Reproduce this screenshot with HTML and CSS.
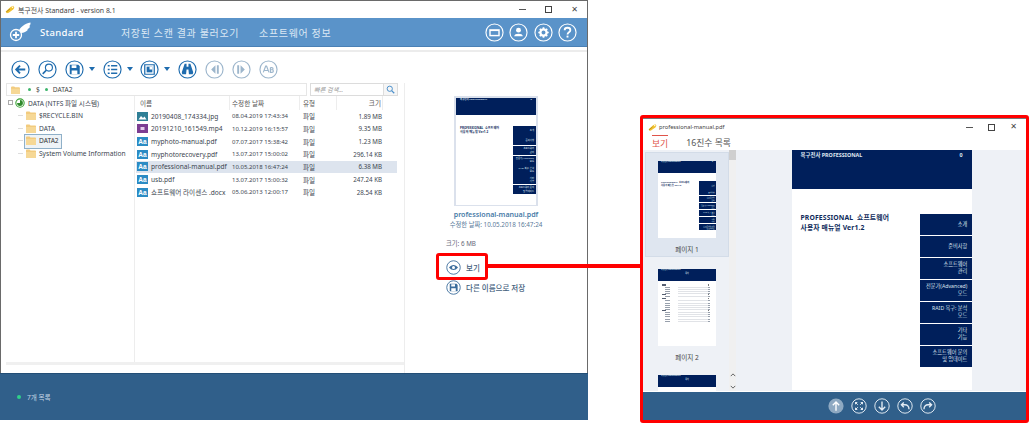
FILE: index.html
```html
<!DOCTYPE html>
<html lang="ko">
<head>
<meta charset="utf-8">
<title>복구전사 Standard</title>
<link rel="stylesheet" href="styles.css">
</head>
<body>
<svg class="sprite" xmlns="http://www.w3.org/2000/svg">
  <symbol id="key" viewBox="0 0 16 14"><path d="M1 10 9 3l4-2 2 3-2 3-7 5-3 1z" fill="#f2c230"/><path d="M2 11 8 6" stroke="#8a6a10" fill="none"/><circle cx="12" cy="3.5" r="1.2" fill="#fff"/></symbol>
  <symbol id="folder" viewBox="0 0 10 9"><path d="M0 1.5C0 .8.4.5 1 .5h2.5l1 1H9c.6 0 1 .4 1 1V8c0 .6-.4 1-1 1H1c-.6 0-1-.4-1-1z" fill="#f2cb7e"/><path d="M0 3h10v5c0 .6-.4 1-1 1H1c-.6 0-1-.4-1-1z" fill="#f6d896"/></symbol>
  <symbol id="ring" viewBox="0 0 20 20"><circle cx="10" cy="10" r="9" fill="none" stroke="currentColor" stroke-width="1.2"/></symbol>
  <symbol id="back" viewBox="0 0 20 20"><use href="#ring"/><path d="M15 10H6M9.5 6 5.5 10l4 4" fill="none" stroke="currentColor" stroke-width="2"/></symbol>
  <symbol id="find" viewBox="0 0 20 20"><use href="#ring"/><circle cx="11.5" cy="8" r="3.7" fill="none" stroke="currentColor" stroke-width="1.2"/><path d="M8.7 10.8 5 14.5" stroke="currentColor" stroke-width="1.8"/></symbol>
  <symbol id="save" viewBox="0 0 20 20"><use href="#ring"/><path d="M5 5h9l1.500 1.500V15H5z" fill="currentColor"/><path d="M7 5.500h5v3H7zM7 11h6v4H7z" fill="#fff"/></symbol>
  <symbol id="list" viewBox="0 0 20 20"><use href="#ring"/><path d="M8.500 6H15M8.500 10H15M8.500 14H15" stroke="currentColor" stroke-width="1.700"/><path d="M5 6h2M5 10h2M5 14h2" stroke="currentColor" stroke-width="1.700"/></symbol>
  <symbol id="pic" viewBox="0 0 20 20"><use href="#ring"/><path d="M5 5h10v10H5z" fill="none" stroke="currentColor" stroke-width="1.300"/><path d="M7 7h6v6H7z" fill="currentColor"/><path d="M10 7h3v3h-3z" fill="#fff"/></symbol>
  <symbol id="bino" viewBox="0 0 20 20"><use href="#ring"/><path d="M7 4h2v3h2V4h2l3 9-.5 2h-4L11 10H9l-.5 5h-4L4 13z" fill="currentColor"/></symbol>
  <symbol id="prev" viewBox="0 0 20 20"><use href="#ring"/><path d="M11 5.500v9L6.500 10zM12.500 5.500h2v9h-2z" fill="currentColor"/></symbol>
  <symbol id="next" viewBox="0 0 20 20"><use href="#ring"/><path d="M9 5.500v9l4.500-4.500zM5.500 5.500h2v9h-2z" fill="currentColor"/></symbol>
  <symbol id="ab" viewBox="0 0 20 20"><use href="#ring"/><path d="M4.500 13 7 6.500h1L10.500 13M5.500 11h4M12 8v5h1.700c1.900 0 1.900-2.700 0-2.700H12m0 0h1.500c1.700 0 1.700-2.300 0-2.300H12" fill="none" stroke="currentColor" stroke-width="1.200"/></symbol>
  <symbol id="eye" viewBox="0 0 20 20"><use href="#ring"/><path d="M4 10c3.500-4.500 8.500-4.500 12 0-3.500 4.500-8.500 4.500-12 0z" fill="currentColor"/><circle cx="10" cy="10" r="2" fill="#fff"/></symbol>
  <symbol id="card" viewBox="0 0 20 20"><use href="#ring"/><path d="M4.500 6.500h11v7.500h-11z" fill="currentColor"/><path d="M6 8.500h8v4H6z" fill="#5a93c9"/></symbol>
  <symbol id="user" viewBox="0 0 20 20"><use href="#ring"/><circle cx="10" cy="7.500" r="2.600" fill="currentColor"/><path d="M5.500 14c0-2 2-2.800 4.500-2.800s4.500.8 4.500 2.800z" fill="currentColor"/></symbol>
  <symbol id="gear" viewBox="0 0 20 20"><use href="#ring"/><circle cx="10" cy="10" r="3.300" fill="none" stroke="currentColor" stroke-width="2.400"/><path d="M10 4.500v2M10 13.500v2M4.500 10h2M13.500 10h2M6.100 6.100l1.400 1.400M12.500 12.500l1.400 1.400M6.100 13.900l1.400-1.400M12.500 7.500l1.400-1.400" stroke="currentColor" stroke-width="1.800"/></symbol>
  <symbol id="help" viewBox="0 0 20 20"><use href="#ring"/><path d="M7 7.500C7 5.800 8.400 5 10 5s3 .9 3 2.500c0 2.200-3 2.200-3 4.500" fill="none" stroke="currentColor" stroke-width="1.900"/><path d="M9 13.300h2v2H9z" fill="currentColor"/></symbol>
  <symbol id="up" viewBox="0 0 20 20"><circle cx="10" cy="10" r="9.500" fill="#8ea9c2"/><path d="M10 16V5M6 9l4-4 4 4" fill="none" stroke="#fff" stroke-width="1.700"/></symbol>
  <symbol id="fit" viewBox="0 0 20 20"><use href="#ring"/><path d="M5 5h3.500L5 8.500zM15 5v3.500L11.500 5zM5 15v-3.500L8.500 15zM15 15h-3.500l3.500-3.500z" fill="currentColor"/><path d="M6 6l2.500 2.500M14 6l-2.500 2.500M6 14l2.500-2.500M14 14l-2.500-2.500" stroke="currentColor" stroke-width="1.200"/></symbol>
  <symbol id="down" viewBox="0 0 20 20"><use href="#ring"/><path d="M10 4.500V15M6 11l4 4 4-4" fill="none" stroke="currentColor" stroke-width="1.700"/></symbol>
  <symbol id="undo" viewBox="0 0 20 20"><use href="#ring"/><path d="M15 14c0-3.500-2-5.500-5-5.500H6M8.500 5.500 5.500 8.500l3 3" fill="none" stroke="currentColor" stroke-width="1.700"/></symbol>
  <symbol id="redo" viewBox="0 0 20 20"><use href="#ring"/><path d="M5 14c0-3.500 2-5.500 5-5.500h4M11.500 5.500l3 3-3 3" fill="none" stroke="currentColor" stroke-width="1.700"/></symbol>
  <symbol id="aa" viewBox="0 0 11 9"><path d="M0 0h11v9H0z" fill="currentColor"/><text x="5.500" y="7" font-size="6.500" font-weight="700" text-anchor="middle" fill="#fff" font-family="Liberation Sans">Aa</text></symbol>
  <symbol id="jpg" viewBox="0 0 11 9"><path d="M0 0h11v9H0z" fill="#2f7f96"/><path d="M1.500 7.500 4 4l2 2 1.500-1.500 2 3z" fill="#fff"/></symbol>
  <symbol id="mp4" viewBox="0 0 11 9"><path d="M0 0h11v9H0z" fill="#7c3d92"/><path d="M3.500 3h4v3h-4z" fill="#e5cdec"/></symbol>
</svg>

<section class="win win-main">
  <header class="titlebar">
    <svg class="ti-key"><use href="#key"/></svg>
    <span class="ti-text">복구전사 Standard - version 8.1</span>
    <div class="winctl winctl-main">
      <span class="ctl-min"></span><span class="ctl-max"></span><span class="ctl-x">✕</span>
    </div>
  </header>
  <nav class="appbar">
    <svg class="logo" viewBox="0 0 22 20"><path d="M9 10.500C11 5 15.500 1.800 21.500.5c.2 1.800-.4 3-1.400 3.800l1 .2c-.6 1.400-1.600 2.200-2.900 2.700l.8.5c-1.600 2-4 3-7 3.200l-1.500.6c-.3-.3-.6-.6-1.500-1z" fill="#fff"/><circle cx="7" cy="13" r="5.500" fill="#5a93c9" stroke="#fff" stroke-width="1.300"/><path d="M7 9.800v6.400M3.800 13h6.400" stroke="#fff" stroke-width="1.800"/></svg>
    <span class="brand">Standard</span>
    <span class="navlink nav-a">저장된 스캔 결과 불러오기</span>
    <span class="navlink">소프트웨어 정보</span>
    <div class="appicons">
      <svg><use href="#card"/></svg><svg><use href="#user"/></svg><svg><use href="#gear"/></svg><svg><use href="#help"/></svg>
    </div>
  </nav>
  <div class="strip"></div>
  <div class="toolbar">
    <svg class="tool"><use href="#back"/></svg>
    <svg class="tool"><use href="#find"/></svg>
    <svg class="tool"><use href="#save"/></svg><i class="caret"></i>
    <svg class="tool"><use href="#list"/></svg><i class="caret"></i>
    <svg class="tool"><use href="#pic"/></svg><i class="caret"></i>
    <svg class="tool"><use href="#bino"/></svg>
    <svg class="tool off"><use href="#prev"/></svg>
    <svg class="tool off"><use href="#next"/></svg>
    <svg class="tool off"><use href="#ab"/></svg>
  </div>
  <div class="body">
    <div class="leftcol">
      <div class="pathrow">
        <div class="pathbar">
          <svg class="pf"><use href="#folder"/></svg><i class="dot"></i><span>$</span><i class="dot"></i><span>DATA2</span>
        </div>
        <div class="searchbox"><span class="sb-ph">빠른 검색...</span><span class="sb-btn"><svg viewBox="0 0 12 12"><circle cx="5" cy="5" r="3.500" fill="none" stroke="#4a8fcb" stroke-width="1.300"/><path d="m7.500 7.500 3.500 3.500" stroke="#4a8fcb" stroke-width="1.600"/></svg></span></div>
      </div>
      <div class="panes">
        <div class="tree">
          <div class="tree-root"><span class="minus"></span><svg class="disk" viewBox="0 0 12 12"><circle cx="6" cy="6" r="5" fill="none" stroke="#3aa335" stroke-width="1.300"/><path d="M6 6V2.500A3.500 3.500 0 1 1 2.500 6z" fill="#2f8a2c"/></svg><span>DATA (NTFS 파일 시스템)</span></div>
          <div class="tree-row"><svg class="tf"><use href="#folder"/></svg><span>$RECYCLE.BIN</span></div>
          <div class="tree-row"><svg class="tf"><use href="#folder"/></svg><span>DATA</span></div>
          <div class="tree-row cur"><svg class="tf"><use href="#folder"/></svg><span class="curlabel">DATA2</span></div>
          <div class="tree-row"><svg class="tf"><use href="#folder"/></svg><span>System Volume Information</span></div>
        </div>
        <div class="files">
          <div class="frow fhead"><span class="c-name">이름</span><span class="c-date">수정한 날짜</span><span class="c-type">유형</span><span class="c-size">크기</span></div>
          <div class="frow"><span class="c-name"><svg class="fi"><use href="#jpg"/></svg>20190408_174334.jpg</span><span class="c-date">08.04.2019 17:43:34</span><span class="c-type">파일</span><span class="c-size">1.89 MB</span></div>
          <div class="frow"><span class="c-name"><svg class="fi"><use href="#mp4"/></svg>20191210_161549.mp4</span><span class="c-date">10.12.2019 16:15:57</span><span class="c-type">파일</span><span class="c-size">9.35 MB</span></div>
          <div class="frow"><span class="c-name"><svg class="fi"><use href="#aa"/></svg>myphoto-manual.pdf</span><span class="c-date">07.07.2017 15:38:42</span><span class="c-type">파일</span><span class="c-size">1.23 MB</span></div>
          <div class="frow"><span class="c-name"><svg class="fi"><use href="#aa"/></svg>myphotorecovery.pdf</span><span class="c-date">13.07.2017 15:00:02</span><span class="c-type">파일</span><span class="c-size">296.14 KB</span></div>
          <div class="frow sel"><span class="c-name"><svg class="fi"><use href="#aa"/></svg>professional-manual.pdf</span><span class="c-date">10.05.2018 16:47:24</span><span class="c-type">파일</span><span class="c-size">6.38 MB</span></div>
          <div class="frow"><span class="c-name"><svg class="fi"><use href="#aa"/></svg>usb.pdf</span><span class="c-date">13.07.2017 15:00:32</span><span class="c-type">파일</span><span class="c-size">247.24 KB</span></div>
          <div class="frow"><span class="c-name"><svg class="fi"><use href="#aa"/></svg>쇼프트웨어 라이센스 .docx</span><span class="c-date">05.06.2013 12:00:17</span><span class="c-type">파일</span><span class="c-size">28.54 KB</span></div>
        </div>
      </div>
      <div class="hscroll"></div>
    </div>
    <aside class="details">
      <div class="preview">
        <div class="page page-m">
          <div class="pg-head"><span>복구전사 PROFESSIONAL</span><span>0</span></div>
          <div class="pg-main">
            <div class="pg-title">PROFESSIONAL&nbsp; 쇼프트웨어<br>사용자 매뉴얼 Ver1.2</div>
            <div class="pg-menu"><span>소개</span><span>준비사항</span><span>소프트웨어<br>관리</span><span>전문가(Advanced)<br>모드</span><span>RAID 복구: 분석<br>모드</span><span>기타<br>기능</span><span>소프트웨어 문의<br>및 업데이트</span></div>
          </div>
        </div>
      </div>
      <div class="d-name">professional-manual.pdf</div>
      <div class="d-date">수정한 날짜: 10.05.2018 16:47:24</div>
      <div class="d-size">크기: 6 MB</div>
      <div class="d-act act-view"><svg><use href="#eye"/></svg><span>보기</span></div>
      <div class="d-act"><svg><use href="#save"/></svg><span>다른 이름으로 저장</span></div>
    </aside>
  </div>
  <footer class="status"><i class="led"></i><span>7개 목록</span></footer>
</section>

<div class="callout"></div>
<div class="callout-line"></div>

<section class="win win-view">
  <header class="v-title">
    <svg class="ti-key"><use href="#key"/></svg>
    <span class="vt-text">professional-manual.pdf</span>
    <div class="winctl winctl-view">
      <span class="ctl-min"></span><span class="ctl-max"></span><span class="ctl-x">✕</span>
    </div>
  </header>
  <div class="tabs"><span class="tab on">보기</span><span class="tab">16진수 목록</span></div>
  <div class="v-body">
    <div class="thumbs">
      <div class="thumb thumb-sel">
        <div class="page page-s">
          <div class="pg-head"><span>복구전사 PROFESSIONAL</span><span>0</span></div>
          <div class="pg-main">
            <div class="pg-title">PROFESSIONAL&nbsp; 쇼프트웨어<br>사용자 매뉴얼 Ver1.2</div>
            <div class="pg-menu"><span>소개</span><span>준비사항</span><span>소프트웨어<br>관리</span><span>전문가(Advanced)<br>모드</span><span>RAID 복구: 분석<br>모드</span><span>기타<br>기능</span><span>소프트웨어 문의<br>및 업데이트</span></div>
          </div>
        </div>
        <div class="thumb-label">페이지 1</div>
      </div>
      <div class="thumb">
        <div class="page page-s">
          <div class="pg-head pg-head-toc"><span>복구전사 PROFESSIONAL</span><b>목차</b></div>
          <div class="toc">
            <i class="t1"></i><i class="t1"></i><i></i><i></i><i></i><i></i><i class="t1"></i><i></i><i class="t1"></i><i></i><i></i><i></i><i></i><i></i><i></i><i class="t1"></i><i></i><i></i><i></i><i class="t1"></i><i></i><i></i>
          </div>
        </div>
        <div class="thumb-label">페이지 2</div>
      </div>
      <div class="thumb">
        <div class="page page-s">
          <div class="pg-head pg-head-toc"><span>복구전사 PROFESSIONAL</span><b>목차</b></div>
        </div>
      </div>
    </div>
    <div class="vscroll">
      <span class="vs-thumb"></span>
      <span class="vs-arrows"><svg viewBox="0 0 8 5"><path d="m1 4 3-3 3 3" fill="none" stroke="#555" stroke-width="1.200"/></svg><svg viewBox="0 0 8 5"><path d="m1 1 3 3 3-3" fill="none" stroke="#555" stroke-width="1.200"/></svg></span>
    </div>
    <div class="stage">
      <div class="page page-l">
        <div class="pg-head"><span>복구전사 PROFESSIONAL</span><span>0</span></div>
        <div class="pg-main">
          <div class="pg-title">PROFESSIONAL&nbsp; 쇼프트웨어<br>사용자 매뉴얼 Ver1.2</div>
          <div class="pg-menu"><span>소개</span><span>준비사항</span><span>소프트웨어<br>관리</span><span>전문가(Advanced)<br>모드</span><span>RAID 복구: 분석<br>모드</span><span>기타<br>기능</span><span>소프트웨어 문의<br>및 업데이트</span></div>
        </div>
      </div>
    </div>
  </div>
  <footer class="v-foot">
    <svg><use href="#up"/></svg><svg><use href="#fit"/></svg><svg><use href="#down"/></svg><svg><use href="#undo"/></svg><svg><use href="#redo"/></svg>
  </footer>
</section>
</body>
</html>
```

FILE: styles.css
```css
* { box-sizing: border-box; }
html, body { margin: 0; height: 423px; overflow: hidden; background: #fff; }
body {
  position: relative;
  width: 1029px;
  font-family: "Noto Sans", "Noto Sans CJK KR", sans-serif;
  font-size: 6.600px;
  color: #3c4650;
}
.sprite { display: none; }
i { display: block; font-style: normal; }

.win { position: absolute; background: #fff; display: flex; flex-direction: column; }

/* main window */
.win-main {
  left: 0; top: 0; width: 588px; height: 420px;
  border: 1px solid #6a6a6a;
  border-bottom: 0;
}
.titlebar { height: 17px; display: flex; align-items: center; flex: none; }
.ti-key { width: 10px; height: 9px; flex: none; margin: 0 3px 0 4px; }
.ti-text { font-size: 6.900px; color: #444; }
.winctl { margin-left: auto; display: flex; align-items: center; color: #444; }
.ctl-min { width: 7px; height: 1px; background: #555; }
.ctl-max { width: 7px; height: 7px; border: 1px solid #444; }
.ctl-x { font-size: 8px; line-height: 8px; font-family: "DejaVu Sans", sans-serif; }
.winctl-main { gap: 19px; padding-right: 9px; }

.appbar {
  height: 29px; flex: none; display: flex; align-items: center;
  background: #5a93c9; color: #fff; border-bottom: 1px solid #4a80b5;
}
.logo { width: 22px; height: 20px; margin-left: 8px; flex: none; }
.brand { font-size: 9.500px; font-weight: 500; margin-left: 9px; letter-spacing: .3px; width: 81px; }
.navlink { font-size: 10px; color: #dbe8f4; letter-spacing: .65px; white-space: nowrap; }
.nav-a { margin-right: 20px; }
.appicons { margin-left: auto; display: flex; gap: 5.500px; padding-right: 10px; color: #fff; }
.appicons svg { width: 19px; height: 19px; }
.strip { height: 5px; flex: none; background: #ececec; border-top: 3px solid #fff; }

.toolbar { height: 31px; flex: none; display: flex; align-items: center; padding: 3px 0 0 10px; color: #1f6cae; }
.tool { width: 19px; height: 19px; flex: none; margin-right: 8px; }
.tool + .caret { margin: 0 7.500px 0 -3px; }
.caret { width: 0; height: 0; border: 3.500px solid transparent; border-top: 4px solid #1f6cae; border-bottom: 0; flex: none; }
.tool.off { color: #9db6cc; }

.body { flex: 1; min-height: 0; display: flex; }
.leftcol { width: 404px; flex: none; display: flex; flex-direction: column; border-right: 1px solid #ededed; }
.pathrow { height: 13px; flex: none; display: flex; margin-left: 5px; gap: 3px; }
.pathbar { width: 301px; border: 1px solid #e6e6e6; display: flex; align-items: center; gap: 5px; padding-left: 4px; color: #444; }
.pf { width: 9px; height: 8px; margin-right: 3px; }
.dot { width: 3px; height: 3px; border-radius: 50%; background: #3db56b; }
.searchbox { width: 88px; display: flex; border: 1px solid #dcdcdc; align-items: center; padding-left: 3px; color: #999; font-style: italic; font-size: 6.200px; }
.sb-ph { flex: 1; }
.sb-btn { width: 14px; height: 100%; display: flex; align-items: center; justify-content: center; border-left: 1px solid #ddd; background: #f6f6f6; }
.sb-btn svg { width: 9px; height: 9px; }

.panes { flex: 1; min-height: 0; display: flex; }
.tree { width: 134px; flex: none; border-right: 1px solid #ededed; padding: 0 0 0 7px; white-space: nowrap; }
.tree-root { height: 13px; display: flex; align-items: center; }
.minus { width: 5px; height: 5px; border: 1px solid #aaa; margin-right: 2px; }
.disk { width: 10px; height: 10px; margin-right: 3px; }
.tree-row { height: 12.700px; display: flex; align-items: center; padding-left: 18px; position: relative; }
.tree-row::after { content: ""; position: absolute; left: 10px; top: 6px; width: 5px; border-top: 1px solid #ddd; }
.tf { width: 10px; height: 9px; margin-right: 3px; flex: none; }
.cur .curlabel { color: #333; }
.cur::before {
  content: ""; position: absolute; left: 16px; top: 0; width: 36px; height: 12.500px;
  border: 1px solid #8fb0c8; background: #eef3f7; z-index: 0;
}
.cur svg, .cur span { position: relative; z-index: 1; }

.files { flex: 1; padding-left: 1px; }
.frow { height: 12.650px; display: flex; align-items: center; width: 261px; white-space: nowrap; }
.fhead { height: 14px; color: #555; }
.fhead span { border-right: 1px solid #ededed; height: 100%; display: flex; align-items: center; }
.c-name { width: 94px; display: flex; align-items: center; }
.c-date { width: 70px; padding-left: 2px; font-size: 6px; }
.c-type { width: 37px; padding-left: 3px; }
.c-size { width: 46px; text-align: right; justify-content: flex-end; padding-right: 1px; font-size: 6.200px; }
.fhead .c-name { padding-left: 4px; }
.fhead .c-date, .fhead .c-size { font-size: 6.600px; }
.sel { background: #dde4ee; }
.fi { width: 11px; height: 9px; margin: 0 3px 0 1px; flex: none; color: #2b8bc4; }
.hscroll { height: 3px; flex: none; background: #f0f0f0; margin: 0 0 8px 5px; }

.details { flex: 1; padding: 0 0 0 41px; display: flex; flex-direction: column; color: #5a7a9a; }
.preview { margin: 13px 0 0 8px; width: 84px; height: 110px; flex: none; border: 2px solid #dbe1ec; }
.d-name { font-size: 7.100px; font-weight: 600; color: #4a7ca8; text-align: center; width: 100px; margin-top: 2px; white-space: nowrap; line-height: 12px; }
.d-date { font-size: 6.300px; width: 100px; text-align: center; white-space: nowrap; line-height: 9px; }
.d-size { font-size: 6.300px; color: #667; margin-top: 10px; line-height: 10px; }
.d-act { display: flex; align-items: center; gap: 5px; color: #44607c; font-weight: 500; font-size: 7.500px; height: 14px; flex: none; }
.act-view { margin-top: 11px; margin-bottom: 6px; }
.d-act svg { width: 15px; height: 15px; color: #3c6d9c; flex: none; }

.status {
  height: 47px; flex: none; background: #305f8a; color: #c6d6e6;
  display: flex; align-items: center; padding-left: 17px; gap: 6px; margin: 0 -1px;
  border-top: 1px solid #234e76;
}
.led { width: 4px; height: 4px; border-radius: 50%; background: #2fd08a; }

/* page rendered at three scales */
.page { width: 18em; height: 24em; background: #fff; overflow: hidden; color: #0e2a5a; flex: none; }
.page-m { font-size: 4.440px; }
.page-s { font-size: 3.200px; }
.page-l { font-size: 10px; }
.pg-head { height: 3.900em; background: #001f5b; color: #dfe6f0; display: flex; justify-content: space-between; padding: .100em .9em 0; }
.pg-head span { font-size: .54em; font-weight: 700; line-height: 1.6; }
.pg-head-toc { position: relative; justify-content: flex-start; }
.pg-head-toc b { position: absolute; left: 0; right: 0; top: 1.500em; text-align: center; font-size: .6em; font-weight: 500; }
.pg-main { display: flex; justify-content: space-between; padding: 2.500em 0 0 .9em; }
.pg-title { font-size: .68em; font-weight: 700; line-height: 1.450; white-space: nowrap; letter-spacing: .02em; margin-top: -.1em; }
.pg-menu { width: 5.200em; flex: none; display: flex; flex-direction: column; gap: .13em; }
.pg-menu span {
  font-size: .52em; height: 3.980em; line-height: 1.400;
  background: #001f5b; color: #dfe6f0; text-align: right;
  display: flex; flex-direction: column; justify-content: center;
  padding-right: .8em; white-space: nowrap;
}
.toc { padding: .7em 1.200em; display: flex; flex-direction: column; gap: .28em; }
.toc i { height: .28em; background: linear-gradient(90deg, #98a0ac 0 10%, transparent 10% 28%, #e1e3e7 28% 92%, #98a0ac 92% 95%, transparent 95%); margin-left: 1em; }
.toc .t1 { margin-left: 0; background: linear-gradient(90deg, #555e70 0 8%, transparent 8% 92%, #777 92% 95%, transparent 95%); }

/* callout */
.callout { position: absolute; left: 436px; top: 253px; width: 52px; height: 27px; border: 3.500px solid #f00; border-radius: 3px; z-index: 3; }
.callout-line { position: absolute; left: 487px; top: 264px; width: 154px; height: 4px; background: #f00; z-index: 3; }

/* viewer */
.win-view {
  left: 640px; top: 115px; width: 389px; height: 308px;
  border: 3.500px solid #f00; border-radius: 3px; z-index: 2;
}
.v-title { height: 17px; flex: none; display: flex; align-items: center; padding-left: 5px; border-top: 1px solid #777; }
.v-title .ti-key { margin: 0 2px 0 0; width: 9px; }
.vt-text { font-size: 5.700px; color: #444; }
.winctl-view { gap: 15px; padding-right: 9px; }
.tabs { height: 15px; flex: none; display: flex; font-size: 8.800px; padding-left: 9px; gap: 18px; color: #555; width: 96px; white-space: nowrap; }
.tab { height: 15px; line-height: 15px; padding-top: 1px; }
.tab.on { color: #e0544a; border-top: 1.500px solid #e0544a; }
.v-body { flex: 1; min-height: 0; display: flex; background: #eef1f6; }
.thumbs { width: 86px; flex: none; overflow: hidden; padding-top: 2px; display: flex; flex-direction: column; gap: 12px; }
.thumb { display: flex; flex-direction: column; align-items: center; flex: none; width: 84px; margin-left: 2px; }
.thumb-sel { background: #dfe6f0; border: 1px solid #d3dce8; padding-top: 8px; height: 105px; }
.thumb-label { font-size: 6.600px; line-height: 10px; margin-top: 7px; color: #444; }
.vscroll { width: 7px; flex: none; background: #f0f0f0; display: flex; flex-direction: column; }
.vs-thumb { height: 10px; background: #cfcfcf; flex: none; }
.vs-arrows { margin-top: auto; display: flex; flex-direction: column; gap: 8px; align-items: center; padding-bottom: 2px; }
.vs-arrows svg { width: 6px; height: 4px; }
.stage { flex: 1; display: flex; justify-content: center; overflow: hidden; padding-left: 1px; }
.v-foot { height: 29px; flex: none; background: #305f8a; border-top: 1px solid #fff; display: flex; align-items: center; gap: 7px; padding-left: 185px; color: #e4ecf4; }
.v-foot svg { width: 16px; height: 16px; }
```
